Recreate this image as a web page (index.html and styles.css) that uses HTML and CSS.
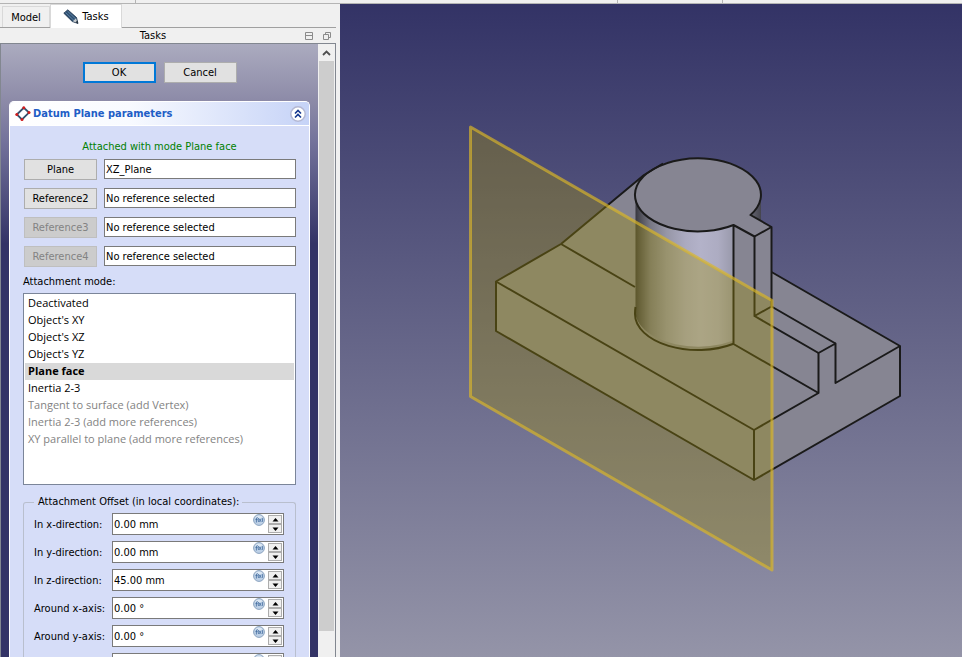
FILE: index.html
```html
<!DOCTYPE html>
<html lang="en">
<head>
<meta charset="utf-8">
<title>Datum Plane parameters</title>
<link rel="stylesheet" href="styles.css">
</head>
<body>
<svg class="symbols" aria-hidden="true">
  <symbol id="fx" viewBox="0 0 12 12">
    <circle cx="6" cy="6" r="5.400" fill="#bdd0e6" stroke="#8ba3bf"/>
    <path d="M2 4a4.500 4.500 0 0 1 8 0z" fill="#dde8f4"/>
    <path d="M4.700 3.500Q3.500 3.200 3.400 5V8.500M2.500 5.500H4.500M5.500 4Q4.800 6 5.500 8M6.300 5L8 7.800M8 5L6.300 7.800M9.200 3.800Q9.900 6 9.200 8" fill="none" stroke="#426c9e" stroke-width=".8"/>
  </symbol>
  <symbol id="up" viewBox="0 0 13 8"><path d="M3.500 5.500h6L6.500 2z"/></symbol>
  <symbol id="down" viewBox="0 0 13 8"><path d="M3.500 2.500h6L6.500 6z"/></symbol>
</svg>
<div class="toolbar-edge"><span></span><span></span><span></span><span></span></div>
<div class="workspace">
  <aside class="dock">
    <div class="tabs" role="tablist">
      <button class="tab" role="tab" aria-selected="false">Model</button>
      <button class="tab active" role="tab" aria-selected="true">
        <svg width="16" height="16" viewBox="0 0 16 16"><path d="M.8 4.200L4.800 .8L13.500 8.500L15 14.500L9.300 12.500z" fill="#2f4f70" stroke="#1f364f" stroke-width=".8"/><path d="M2.500 3.500L11 11.500M4.500 2.200L12.500 9.800" stroke="#5d83a6" stroke-width="1"/><path d="M9.800 12.300L13 9.300L14.500 14z" fill="#c9cdd0"/><path d="M12.500 13.300L15 14.500L14.300 11.800z" fill="#18222c"/></svg>
        Tasks
      </button>
    </div>
    <div class="dock-title">
      <span>Tasks</span>
      <button aria-label="Minimize"><svg width="9" height="9" viewBox="0 0 9 9"><path d="M.5 .5h7v7h-7zM.5 3.500h7" fill="none" stroke="#8b8b8b"/></svg></button>
      <button aria-label="Float"><svg width="9" height="9" viewBox="0 0 9 9"><path d="M2.500 2.500v-2h5v5h-2M.5 2.500h5v5h-5z" fill="none" stroke="#8b8b8b"/></svg></button>
    </div>
    <div class="scroll-frame">
      <div class="task-view">
        <div class="dialog-buttons">
          <button class="push default">OK</button>
          <button class="push">Cancel</button>
        </div>
        <section class="card">
          <header class="card-head">
            <svg width="16" height="16" viewBox="0 0 16 16"><path d="M1.800 8.500L8.800 1.800L14 6.600L7 13.500z" fill="none" stroke="#35526f" stroke-width="1.800"/><g fill="#d41c1c"><circle cx="1.800" cy="8.500" r="1.500"/><circle cx="8.800" cy="1.800" r="1.500"/><circle cx="14" cy="6.600" r="1.500"/><circle cx="7" cy="13.500" r="1.500"/></g></svg>
            <h1>Datum Plane parameters</h1>
            <button class="collapse" aria-label="Collapse"><svg width="16" height="16" viewBox="0 0 16 16"><circle cx="8" cy="8" r="7.200" fill="#fff" stroke="#b4b8d4" stroke-width="1.500"/><path d="M5 7.500L8 4.500L11 7.500M5 11.500L8 8.500L11 11.500" fill="none" stroke="#15378f" stroke-width="1.600"/></svg></button>
          </header>
          <div class="card-body">
            <p class="status">Attached with mode Plane face</p>
            <div class="refs">
              <button class="push" id="r1">Plane</button><input type="text" aria-labelledby="r1" value="XZ_Plane">
              <button class="push" id="r2">Reference2</button><input type="text" aria-labelledby="r2" value="No reference selected">
              <button class="push" id="r3" disabled>Reference3</button><input type="text" aria-labelledby="r3" value="No reference selected">
              <button class="push" id="r4" disabled>Reference4</button><input type="text" aria-labelledby="r4" value="No reference selected">
            </div>
            <label class="mode-label" for="mode">Attachment mode:</label>
            <select class="mode-list" id="mode" size="11">
              <option>Deactivated</option>
              <option>Object's XY</option>
              <option>Object's XZ</option>
              <option>Object's YZ</option>
              <option selected>Plane face</option>
              <option>Inertia 2-3</option>
              <option disabled>Tangent to surface (add Vertex)</option>
              <option disabled>Inertia 2-3 (add more references)</option>
              <option disabled>XY parallel to plane (add more references)</option>
            </select>
            <fieldset class="offset">
              <legend>Attachment Offset (in local coordinates):</legend>
              <div class="rows">
                <label for="ox">In x-direction:</label>
                <div class="spin"><input id="ox" type="text" value="0.00 mm"><svg class="fx"><use href="#fx"/></svg><span class="steps"><button aria-label="Increase"><svg><use href="#up"/></svg></button><button aria-label="Decrease"><svg><use href="#down"/></svg></button></span></div>
                <label for="oy">In y-direction:</label>
                <div class="spin"><input id="oy" type="text" value="0.00 mm"><svg class="fx"><use href="#fx"/></svg><span class="steps"><button aria-label="Increase"><svg><use href="#up"/></svg></button><button aria-label="Decrease"><svg><use href="#down"/></svg></button></span></div>
                <label for="oz">In z-direction:</label>
                <div class="spin"><input id="oz" type="text" value="45.00 mm"><svg class="fx"><use href="#fx"/></svg><span class="steps"><button aria-label="Increase"><svg><use href="#up"/></svg></button><button aria-label="Decrease"><svg><use href="#down"/></svg></button></span></div>
                <label for="ax">Around x-axis:</label>
                <div class="spin"><input id="ax" type="text" value="0.00 °"><svg class="fx"><use href="#fx"/></svg><span class="steps"><button aria-label="Increase"><svg><use href="#up"/></svg></button><button aria-label="Decrease"><svg><use href="#down"/></svg></button></span></div>
                <label for="ay">Around y-axis:</label>
                <div class="spin"><input id="ay" type="text" value="0.00 °"><svg class="fx"><use href="#fx"/></svg><span class="steps"><button aria-label="Increase"><svg><use href="#up"/></svg></button><button aria-label="Decrease"><svg><use href="#down"/></svg></button></span></div>
                <span></span>
                <div class="spin"><input type="text" aria-label="Angle"><svg class="fx"><use href="#fx"/></svg><span class="steps"><button aria-label="Increase"><svg><use href="#up"/></svg></button><button aria-label="Decrease"><svg><use href="#down"/></svg></button></span></div>
              </div>
            </fieldset>
          </div>
        </section>
      </div>
      <div class="scrollbar">
        <button aria-label="Scroll up"><svg width="9" height="6" viewBox="0 0 9 6"><path d="M1 5L4.500 1.500L8 5" fill="none" stroke="#505050" stroke-width="1.800"/></svg></button>
        <span class="thumb"></span>
      </div>
    </div>
  </aside>
  <main class="viewport">
    <svg class="scene" viewBox="340 4 622 653" role="img" aria-label="Part with datum plane">
      <defs>
        <linearGradient id="cyl" gradientUnits="userSpaceOnUse" x1="635" x2="761" y1="0" y2="0">
          <stop offset="0" stop-color="#35353c"/><stop offset=".03" stop-color="#484851"/>
          <stop offset=".12" stop-color="#777783"/><stop offset=".25" stop-color="#9696a6"/>
          <stop offset=".4" stop-color="#abaac0"/><stop offset=".52" stop-color="#b3b2c9"/>
          <stop offset=".66" stop-color="#adacc2"/><stop offset=".78" stop-color="#9999ab"/>
          <stop offset=".92" stop-color="#666672"/><stop offset="1" stop-color="#45454e"/>
        </linearGradient>
      </defs>
      <path d="M496 281.500L561 244L645 174L700 200L771 272L900 346V396L754 480L496 331z" fill="#868592"/>
      <path d="M635.500 194.500A63 36.500 0 0 0 761 194.500V314A63 36 0 0 1 635.500 314z" fill="url(#cyl)"/>
      <path d="M733.500 225L750.500 215L771 227V306L836 343L818 353V393L733.500 344z" fill="#868592"/>
      <ellipse cx="698" cy="194.500" rx="63" ry="36.500" fill="#868592"/>
      <path d="M733.500 225L750.500 215L771 227L754.500 236.500z" fill="#868592"/>
      <g fill="none" stroke="#1a1a1a" stroke-width="2" stroke-linejoin="round">
        <path d="M561 244L496 281.500V331L754 480L900 396V346L771.500 272"/>
        <path d="M496 281.500L754 430V480M754 430L818.500 393V353L835.500 343.500V383L900 346"/>
        <path d="M561 244L644 175L663 163.500M561 244L635 287"/>
        <path d="M733.500 225A63 36.500 0 1 1 750.500 215L771.500 227V306.500L754.500 316V236.500L733.500 225V344L818.500 393"/>
        <path d="M754.500 236.500L771.500 227M754.500 316L818.500 353M771.500 306.500L835.500 343.500"/>
        <path d="M635.500 307Q635 310 635 314A63 36 0 0 0 733.500 343.800"/>
      </g>
      <path d="M470.500 127L772 300.500V570L470.500 396.500z" fill="#9f8c0c" fill-opacity=".36"/>
      <path d="M470.500 127L772 300.500V570L470.500 396.500z" fill="none" stroke="#dcb828" stroke-opacity=".66" stroke-width="3" stroke-linejoin="round"/>
    </svg>
  </main>
</div>
</body>
</html>
```
FILE: styles.css
```css
* { box-sizing: border-box; }
body {
  margin: 0;
  height: 100vh;
  overflow: hidden;
  display: flex;
  flex-direction: column;
  background: #f0f0f0;
  color: #000;
  font: 11px/14px "DejaVu Sans Condensed", "DejaVu Sans", sans-serif;
}
button, input, select { font: inherit; color: inherit; margin: 0; }
button { padding: 0; }
.symbols { position: absolute; width: 0; height: 0; }
.toolbar-edge {
  flex: none;
  height: 4px;
  display: grid;
  grid-template-columns: 136px 482px 105px 1fr;
  border-bottom: 1px solid #b4b4b4;
}
.toolbar-edge span { border-right: 1px solid #b4b4b4; }
.toolbar-edge span:last-child { border: 0; }
.workspace { flex: 1; min-height: 0; display: flex; }
.dock { flex: none; width: 340px; padding-right: 4px; display: flex; flex-direction: column; }
.tabs { height: 24px; display: flex; align-items: flex-end; padding-left: 2px; border-bottom: 1px solid #a0a0a0; }
.tab { height: 21px; width: 48px; padding-top: 2px; border: 1px solid #d9d9d9; border-bottom: 0; background: #f0f0f0; }
.tab.active {
  height: 24px;
  width: 72px;
  margin-bottom: -1px;
  padding: 0;
  display: flex;
  align-items: center;
  justify-content: center;
  gap: 3px;
  background: #fff;
}
.dock-title { height: 15px; padding-top: 1px; display: grid; grid-template-columns: 1fr 19px 17px; align-items: center; text-align: center; }
.dock-title span { padding-left: 6px; }
.dock-title button { display: flex; justify-content: center; border: 0; background: none; }
.scroll-frame { flex: 1; min-height: 0; display: flex; border: 1px solid #828790; border-bottom: 0; }
.task-view {
  flex: 1;
  overflow: hidden;
  padding: 18px 8px 0;
  background: linear-gradient(#ababbf 0, #8d8ba8 56px, #72719a 100px, #333366 200px);
}
.dialog-buttons { display: flex; justify-content: center; gap: 8px; margin-bottom: 18px; }
.push { height: 21px; width: 73px; padding-top: 1px; border: 1px solid #adadad; background: #e1e1e1; }
.push.default { border: 2px solid #0078d7; }
.push:disabled { border-color: #bfbfbf; background: #ccc; color: #838383; }
.card { border: 1px solid #fff; border-bottom: 0; border-radius: 5px 5px 0 0; background: #d6ddf8; overflow: hidden; }
.card-head {
  height: 24px;
  display: flex;
  align-items: center;
  gap: 2px;
  padding: 0 3px 0 5px;
  background: linear-gradient(90deg, #fff, #f8faff 40%, #c6d3f7);
  border-bottom: 1px solid #fff;
}
.card-head h1 { flex: 1; margin: 0; font-size: 11px; line-height: 14px; color: #215dc6; }
.collapse { display: flex; border: 0; background: none; }
.card-body { padding: 14px 13px 0; }
.status { margin: 0 0 5px; text-align: center; color: #008000; }
.refs { display: grid; grid-template-columns: 73px 1fr; gap: 8px 7px; padding-left: 1px; }
input { width: 100%; min-width: 0; height: 20px; padding: 1px 1px 0; border: 1px solid #7a7a7a; background: #fff; outline: 0; }
.mode-label { display: block; margin: 8px 0 4px; }
.mode-list {
  display: block;
  width: 100%;
  height: 192px;
  padding: 1px;
  border: 1px solid #7b8599;
  border-radius: 0;
  background: #fff;
  outline: 0;
  overflow: hidden;
  font: 11px/17px "Open Sans", sans-serif;
}
.mode-list option { min-height: 17px; height: 17px; padding: 0 3px; color: #000; }
.mode-list option:disabled { color: #838383; }
.mode-list option:checked { font-weight: bold; background: #d9d9d9 linear-gradient(#d9d9d9, #d9d9d9); }
.offset { margin: 10px 0 0; padding: 0 11px 0 10px; border: 1px solid #b9bfce; border-bottom: 0; border-radius: 3px 3px 0 0; min-width: 0; }
.offset legend { padding: 0 3px 0 4px; line-height: 14px; }
.rows { display: grid; grid-template-columns: 78px 1fr; row-gap: 6px; align-items: center; padding-top: 4px; }
.rows label { padding-top: 2px; }
.spin { height: 22px; display: flex; border: 1px solid #7a7a7a; background: #fff; }
.spin input { flex: 1; border: 0; }
.fx { flex: none; width: 12px; height: 12px; margin-right: 2px; }
.steps { flex: none; display: grid; grid-template-rows: 1fr 1fr; width: 14px; margin: 1px; gap: 0; }
.steps button { display: flex; align-items: center; justify-content: center; border: 1px solid #adadad; background: #f0f0f0; min-height: 0; overflow: hidden; }
.steps svg { flex: none; width: 13px; height: 8px; }
.scrollbar { width: 17px; display: grid; grid-template-rows: 17px 22fr 1fr; border: solid #f0f0f0; border-width: 0 1px; }
.scrollbar button { display: flex; align-items: center; justify-content: center; border: 0; background: #f0f0f0; }
.thumb { background: #cdcdcd; }
.viewport { flex: 1; min-width: 0; background: linear-gradient(#333366, #9494a8); }
.scene { display: block; width: 100%; height: 100%; }
```
